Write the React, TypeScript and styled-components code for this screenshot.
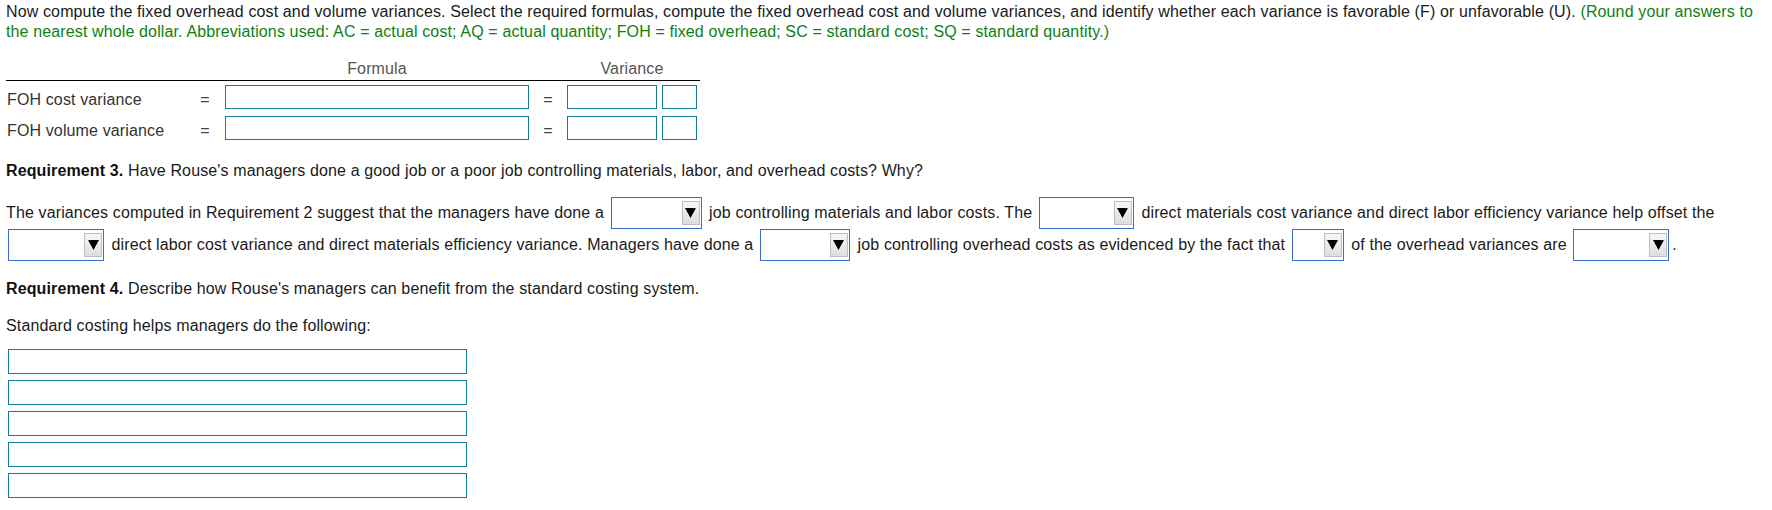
import React from "react";
import styled, { createGlobalStyle } from "styled-components";

const GlobalStyle = createGlobalStyle`
  html, body {
    margin: 0;
    padding: 0;
    background: #ffffff;
  }
  body {
    font-family: "Liberation Sans", Arial, Helvetica, sans-serif;
    font-size: 16px;
    letter-spacing: 0.13px;
    color: #1a1a1a;
  }
  * { box-sizing: border-box; }
`;

const Page = styled.div`
  padding: 2px 0 0 6px;
`;

const Intro = styled.p`
  margin: 0;
  line-height: 20px;
`;

const Note = styled.span`
  color: #0f7f12;
`;

const FormulaGrid = styled.div`
  display: grid;
  grid-template-columns: 189px 20px 314px 38px 90px 43px;
  width: 694px;
  margin-top: 17px;
`;

const HeadCell = styled.div<{ $span?: number; $padL?: number; $padR?: number }>`
  grid-column: span ${(p) => p.$span ?? 1};
  line-height: 20px;
  padding: 0 ${(p) => p.$padR ?? 0}px 1px ${(p) => p.$padL ?? 0}px;
  border-bottom: 1px solid #000;
  text-align: center;
  color: #555;
`;

const Cell = styled.div<{ $center?: boolean; $padL?: number }>`
  height: 31px;
  display: flex;
  align-items: center;
  justify-content: ${(p) => (p.$center ? "center" : "flex-start")};
  padding-left: ${(p) => p.$padL ?? 0}px;
`;

const RowLabel = styled.span`
  color: #333;
  padding-left: 1px;
  margin-top: 6px;
`;

const Equals = styled.span`
  color: #444;
  margin-top: 6px;
`;

const TealInput = styled.input<{ $w: number; $h?: number }>`
  width: ${(p) => p.$w}px;
  height: ${(p) => p.$h ?? 24}px;
  border: 1px solid #127b98;
  border-radius: 0;
  padding: 0 4px;
  margin: 0;
  font: inherit;
  background: #fff;
  outline: none;
  display: block;
`;

const Requirement = styled.p<{ $top: number }>`
  margin: ${(p) => p.$top}px 0 0;
  line-height: 20px;
`;

const Strong = styled.b`
  font-weight: bold;
  color: #111;
`;

const Answer = styled.p`
  margin: 16px 0 0;
  line-height: 32px;
  padding-right: 8px;
`;

const SelectBox = styled.span<{ $w: number }>`
  display: inline-flex;
  vertical-align: top;
  align-items: center;
  justify-content: flex-end;
  width: ${(p) => p.$w}px;
  height: 32px;
  margin: 0 3px 0 2px;
  border: 1px solid #3a6bd0;
  background: #fff;
  padding-right: 1px;
`;

const ArrowButton = styled.span`
  display: flex;
  align-items: center;
  justify-content: center;
  width: 18px;
  height: 24px;
  border: 1px solid #bdbdbd;
  background: linear-gradient(#f6f6f6, #dedede);
`;

const Lines = styled.div`
  display: flex;
  flex-direction: column;
  gap: 6px;
  margin: 13px 0 0 2px;
`;

const Dropdown: React.FC<{ w: number }> = ({ w }) => (
  <SelectBox $w={w}>
    <ArrowButton>
      <svg width="11" height="10" viewBox="0 0 11 10" aria-hidden="true">
        <polygon points="0,0 11,0 5.5,10" fill="#000" />
      </svg>
    </ArrowButton>
  </SelectBox>
);

const rows = ["FOH cost variance", "FOH volume variance"];

export default function App() {
  return (
    <>
      <GlobalStyle />
      <Page>
        <Intro>
          Now compute the fixed overhead cost and volume variances. Select the required formulas, compute the fixed
          overhead cost and volume variances, and identify whether each variance is favorable (F) or unfavorable (U).{" "}
          <Note>
            (Round your answers to the nearest whole dollar. Abbreviations used: AC = actual cost; AQ = actual
            quantity; FOH = fixed overhead; SC = standard cost; SQ = standard quantity.)
          </Note>
        </Intro>

        <FormulaGrid>
          <HeadCell $span={2} />
          <HeadCell $padL={10}>Formula</HeadCell>
          <HeadCell />
          <HeadCell $span={2} $padR={3}>Variance</HeadCell>
          {rows.map((r) => (
            <React.Fragment key={r}>
              <Cell>
                <RowLabel>{r}</RowLabel>
              </Cell>
              <Cell $center>
                <Equals>=</Equals>
              </Cell>
              <Cell $padL={10}>
                <TealInput $w={304} />
              </Cell>
              <Cell $center>
                <Equals>=</Equals>
              </Cell>
              <Cell>
                <TealInput $w={90} />
              </Cell>
              <Cell $padL={5}>
                <TealInput $w={35} />
              </Cell>
            </React.Fragment>
          ))}
        </FormulaGrid>

        <Requirement $top={18}>
          <Strong>Requirement 3.</Strong> Have Rouse's managers done a good job or a poor job controlling materials,
          labor, and overhead costs? Why?
        </Requirement>

        <Answer>
          The variances computed in Requirement 2 suggest that the managers have done a <Dropdown w={91} /> job
          controlling materials and labor costs. The <Dropdown w={95} /> direct materials cost variance and direct
          labor efficiency variance help offset the <Dropdown w={96} /> direct labor cost variance and direct
          materials efficiency variance. Managers have done a <Dropdown w={90} /> job controlling overhead costs as
          evidenced by the fact that <Dropdown w={52} /> of the overhead variances are <Dropdown w={96} />.
        </Answer>

        <Requirement $top={18}>
          <Strong>Requirement 4.</Strong> Describe how Rouse's managers can benefit from the standard costing system.
        </Requirement>

        <Requirement $top={17}>Standard costing helps managers do the following:</Requirement>

        <Lines>
          {[0, 1, 2, 3, 4].map((i) => (
            <TealInput key={i} $w={459} $h={25} />
          ))}
        </Lines>
      </Page>
    </>
  );
}
